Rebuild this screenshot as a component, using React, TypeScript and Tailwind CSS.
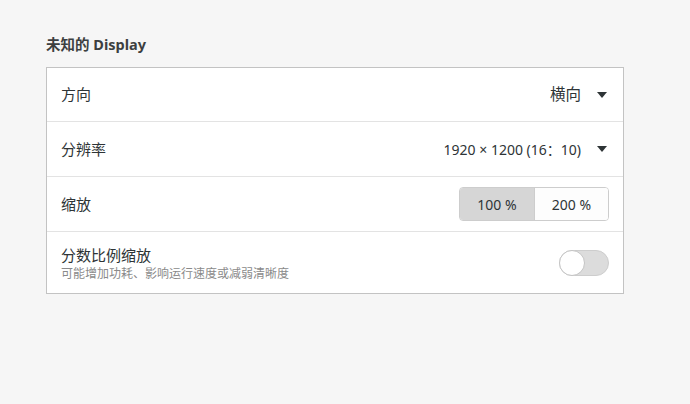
import { useState } from 'react';

const font = { fontFamily: '"Noto Sans", "Noto Sans CJK SC", sans-serif' };

function Arrow() {
    return (
        <svg width="10" height="6" viewBox="0 0 10 6" className="ml-[16px]">
            <path d="M0 0 L10 0 L5 6 Z" fill="#2e3436" />
        </svg>
    );
}

export default function App() {
    const [scale, setScale] = useState(100);
    const [fractional, setFractional] = useState(false);

    return (
        <div className="w-[690px] h-[404px] bg-[#f6f6f6] pl-[46px] pt-[34px] text-[#2e3436]" style={font}>
            <h2 className="text-[14.5px] font-bold text-[#3d3f40] leading-[20px] mb-[13px]">未知的 Display</h2>

            <div className="w-[578px] bg-white border border-[#c3c3c3] flex flex-col">
                <div className="h-[54px] flex items-center justify-between pl-[14px] pr-[16px] border-b border-[#e3e3e3]">
                    <span className="text-[15px]">方向</span>
                    <div className="flex items-center text-[15.5px]">
                        横向
                        <Arrow />
                    </div>
                </div>

                <div className="h-[55px] flex items-center justify-between pl-[14px] pr-[16px] border-b border-[#e3e3e3]">
                    <span className="text-[15px]">分辨率</span>
                    <div className="flex items-center text-[14px]">
                        1920 × 1200 (16：10)
                        <Arrow />
                    </div>
                </div>

                <div className="h-[55px] flex items-center justify-between pl-[14px] pr-[14px] border-b border-[#e3e3e3]">
                    <span className="text-[15px]">缩放</span>
                    <div className="flex h-[34px] rounded-[4px] border border-[#cdcdcd] overflow-hidden text-[14px]">
                        <button
                            onClick={() => setScale(100)}
                            className={`w-[75px] ${scale === 100 ? 'bg-[#d6d6d6]' : 'bg-white'} border-r border-[#cdcdcd]`}
                        >
                            100 %
                        </button>
                        <button
                            onClick={() => setScale(200)}
                            className={`w-[73px] ${scale === 200 ? 'bg-[#d6d6d6]' : 'bg-[#fdfdfd]'}`}
                        >
                            200 %
                        </button>
                    </div>
                </div>

                <div className="h-[61px] flex items-center justify-between pl-[14px] pr-[14px]">
                    <div className="flex flex-col pt-[2px]">
                        <span className="text-[15px] leading-[20px]">分数比例缩放</span>
                        <span className="text-[12px] leading-[18px] text-[#8a8a8a]">可能增加功耗、影响运行速度或减弱清晰度</span>
                    </div>
                    <button
                        onClick={() => setFractional(!fractional)}
                        className={`w-[50px] h-[26px] rounded-full border border-[#cdcdcd] flex items-center ${fractional ? 'bg-[#e95420] justify-end' : 'bg-[#dcdcdc] justify-start'}`}
                    >
                        <span className="w-[26px] h-[26px] -m-px rounded-full bg-white border border-[#c4c4c4]" />
                    </button>
                </div>
            </div>
        </div>
    );
}
